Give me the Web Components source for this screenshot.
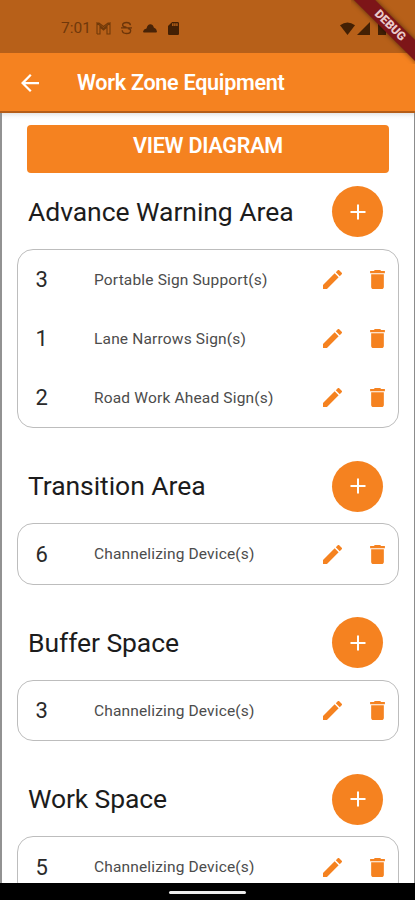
<!DOCTYPE html>
<html lang="en">
<head>
<meta charset="utf-8">
<title>Work Zone Equipment</title>
<style>
html,body{margin:0;height:100%;overflow:hidden;background:#fff}
body{font-family:Roboto,"Liberation Sans",sans-serif}
</style>
</head>
<body>
<phone-screen>
  <status-bar slot="top" time="7:01"></status-bar>
  <app-bar slot="top">Work Zone Equipment</app-bar>
  <wide-button>VIEW DIAGRAM</wide-button>
  <equipment-area heading="Advance Warning Area" fit="265.5">
    <equipment-row count="3" fit="173.5">Portable Sign Support(s)</equipment-row>
    <equipment-row count="1" fit="152">Lane Narrows Sign(s)</equipment-row>
    <equipment-row count="2" fit="179.5">Road Work Ahead Sign(s)</equipment-row>
  </equipment-area>
  <equipment-area heading="Transition Area" fit="177.5">
    <equipment-row count="6" fit="160.5">Channelizing Device(s)</equipment-row>
  </equipment-area>
  <equipment-area heading="Buffer Space" fit="151">
    <equipment-row count="3" fit="160.5">Channelizing Device(s)</equipment-row>
  </equipment-area>
  <equipment-area heading="Work Space" fit="139">
    <equipment-row count="5" fit="160.5">Channelizing Device(s)</equipment-row>
  </equipment-area>
  <nav-bar slot="bottom"></nav-bar>
  <debug-banner slot="overlay">DEBUG</debug-banner>
</phone-screen>
<script>
function define(name, markup, ready) {
  customElements.define(name, class extends HTMLElement {
    connectedCallback() {
      if (this.shadowRoot) return;
      this.attachShadow({ mode: 'open' }).innerHTML = markup;
      if (ready) ready(this, this.shadowRoot);
    }
  });
}
/* Spreads letter-spacing so that the text spans the given width. */
function fit(el, host) {
  const want = parseFloat(host.getAttribute('fit'));
  if (!want) return;
  const n = (host.getAttribute('heading') || host.textContent).trim().length;
  el.style.letterSpacing = ((want - el.getBoundingClientRect().width) / n).toFixed(3) + 'px';
}
define('phone-screen', `
<style>
:host{position:relative;display:flex;flex-direction:column;width:415px;height:900px;overflow:hidden;background:#fff}
main{flex:1;min-height:0;overflow:hidden;box-sizing:border-box;padding:12px 15px 0 15px;border-left:2px solid #929292;border-right:1px solid #8c8c8c;background:linear-gradient(#e6e6e6,#fafafa 4px,#fff 7px)}
</style>
<slot name="top"></slot><main><slot></slot></main><slot name="bottom"></slot><slot name="overlay"></slot>`);

define('status-bar', `
<style>
:host{display:flex;align-items:center;flex:none;box-sizing:border-box;height:52.5px;padding:4px 29px 0 61px;background:#b76019;color:#70380b;font-size:15.5px}
span{width:28px;margin-right:7px}
svg{display:block;flex:none}
.m{margin-right:10px}.s{margin-right:11px}.c{margin-right:11px}.w{margin-left:auto;margin-right:2px}.g{margin-right:8px}
</style>
<span></span>
<svg class="m" width="15" height="13" viewBox="0 0 15 13" fill="none" stroke="#713909" stroke-width="1.1"><path d="M1 12V1l6.5 5.500L14 1v11h-3V5L7.500 8 4 5v7H1M1 1h2l4.500 3.500L12 1h2"/></svg>
<svg class="s" width="11" height="14" viewBox="0 0 12 14" fill="none" stroke="#6c3509" stroke-width="1.500"><path d="M10.300 4C10 2 8.500 1 6 1 3.500 1 1.800 2 1.800 3.800c0 1.700 1.300 2.300 4.200 2.300M1.300 9.500C1.500 12 3.300 13 6 13s4.500-1.100 4.500-3.100c0-1.400-1-2.200-3-2.400M0 6.800h12"/></svg>
<svg class="c" width="14" height="9" viewBox="0 4 24 16" preserveAspectRatio="none" fill="#482307"><path d="M0 17.500Q1 13 6 12Q8 4.500 12.500 4.500Q17 4.500 18.500 10Q23.500 12 24 17.500L23 19H1z"/></svg>
<svg width="11" height="13" viewBox="4 2 16 20" preserveAspectRatio="none" fill="#432004"><path d="M18 2h-8L4.020 8 4 20c0 1.100.900 2 2 2h12c1.100 0 2-.900 2-2V4c0-1.100-.900-2-2-2zm-6 6h-2V4h2v4zm3 0h-2V4h2v4zm3 0h-2V4h2v4z"/></svg>
<svg class="w" width="15" height="13" viewBox="0 0 15 13" fill="#432004"><path d="M0 3.300Q7.500-2.500 15 3.300L7.500 13z"/></svg>
<svg class="g" width="13" height="13" viewBox="0 0 13 13" fill="#432004"><path d="M13 0v13H0z"/></svg>
<svg width="8" height="13" viewBox="0 0 8 13" fill="#432004"><path d="M0 1.500h2.500V0h3v1.500H8V13H0z"/></svg>`,
(h, r) => { r.querySelector('span').textContent = h.getAttribute('time'); });

define('app-bar', `
<style>
:host{display:flex;align-items:center;flex:none;box-sizing:border-box;height:60.5px;padding:2px 0 0 21px;background:#f58220;border-bottom:2px solid #b55d17;color:#fff;font-size:21.6px;font-weight:600;line-height:26px}
svg{display:block;margin-right:38px}
span{white-space:nowrap}
</style>
<svg width="18" height="18" viewBox="4 4 16 16" fill="#fff"><path d="M20 11H7.830l5.590-5.590L12 4l-8 8 8 8 1.410-1.410L7.830 13H20v-2z"/></svg>
<span><slot></slot></span>`,
(h, r) => { h.setAttribute('fit', '207.5'); fit(r.querySelector('span'), h); });

define('wide-button', `
<style>
:host{display:flex;justify-content:center;box-sizing:border-box;height:48px;margin:0 10px 13.4px 10px;padding-top:8px;border-radius:4px;background:#f58220;color:#fff;font-size:21.6px;font-weight:600;line-height:26px}
span{white-space:nowrap}
</style><span><slot></slot></span>`,
(h, r) => { h.setAttribute('fit', '150'); fit(r.querySelector('span'), h); });

define('equipment-area', `
<style>
:host{display:block;margin-bottom:32.5px}
header{display:flex;justify-content:space-between;align-items:center;height:51px;margin:0 16px 11.5px 11px}
h2{margin:0;font-size:26.5px;font-weight:400;line-height:32px;color:#1c1c1c;white-space:nowrap}
button{display:grid;place-items:center;width:51px;height:51px;padding:0;border:0;border-radius:50%;background:#f58220}
section{box-sizing:border-box;padding:.25px 0;border:1px solid #bdbdbd;border-radius:16px}
</style>
<header><h2></h2><button aria-label="Add"><svg width="16" height="16" viewBox="0 0 16 16" stroke="#fff" stroke-width="2"><path d="M8 .5v15M.5 8h15"/></svg></button></header>
<section><slot></slot></section>`,
(h, r) => { const t = r.querySelector('h2'); t.textContent = h.getAttribute('heading'); fit(t, h); });

define('equipment-row', `
<style>
:host{display:flex;align-items:center;height:59px;box-sizing:border-box;padding:0 13px 0 17.5px;color:#4c4c4c;font-size:15.5px}
b{width:58.5px;font-size:22px;font-weight:400;color:#2a2a2a}
span{white-space:nowrap}
svg{display:block}
.e{margin-left:auto;margin-right:28px}
</style>
<b></b><span><slot></slot></span>
<svg class="e" width="19" height="19" viewBox="3 3 18 18" fill="#f58220"><path d="M3 17.250V21h3.750L17.810 9.940l-3.750-3.750L3 17.250zM20.710 7.040a1 1 0 0 0 0-1.410l-2.340-2.340a1 1 0 0 0-1.410 0l-1.830 1.830 3.750 3.750 1.830-1.830z"/></svg>
<svg width="15" height="19" viewBox="5 3 14 18" fill="#f58220"><path d="M6 19c0 1.100.900 2 2 2h8c1.100 0 2-.900 2-2V7H6v12zM19 4h-3.500l-1-1h-5l-1 1H5v2h14V4z"/></svg>`,
(h, r) => { r.querySelector('b').textContent = h.getAttribute('count'); fit(r.querySelector('span'), h); });

define('nav-bar', `
<style>
:host{display:flex;justify-content:center;flex:none;height:17.5px;background:#000}
i{width:77px;height:3px;margin-top:8.5px;border-radius:2px;background:#ececec}
</style><i></i>`);

define('debug-banner', `
<style>
:host{position:absolute;top:0;right:0;width:64px;height:64px;overflow:hidden}
div{position:absolute;left:-11px;top:18px;width:100px;height:15px;display:flex;align-items:center;justify-content:center;transform:rotate(45deg);background:#7d1518;color:#e9c9c9;box-shadow:0 0 5px rgba(0,0,0,.55);font-size:12px;font-weight:900;line-height:15px}
</style><div><slot></slot></div>`);
</script>
</body>
</html>
